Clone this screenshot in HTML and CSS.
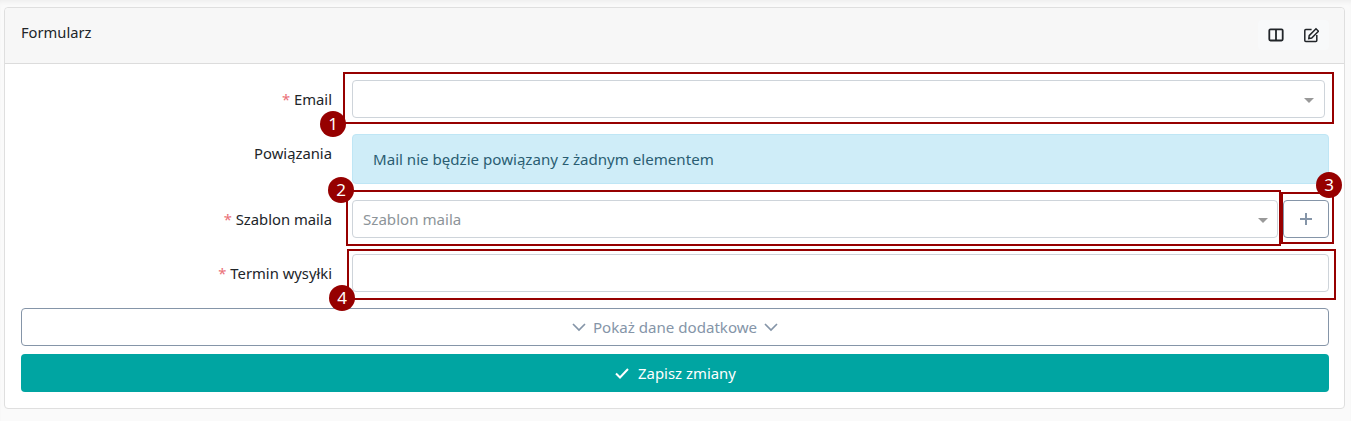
FILE: index.html
```html
<!DOCTYPE html>
<html lang="pl">
<head>
    <meta charset="UTF-8">
    <meta name="viewport" content="width=device-width, initial-scale=1.0">
    <title>Formularz</title>
    <link rel="stylesheet" href="styles.css">
</head>
<body>
    <div class="card">
        <div class="card-header">
            <span class="card-title">Formularz</span>
            <div class="header-tools">
                <button class="tool-btn" type="button">
                    <svg width="16" height="16" viewBox="0 0 16 16" fill="none" stroke="#212529" stroke-width="1.8"><rect x="1.3" y="2.3" width="13.4" height="11.2" rx="1.2"/><path d="M8 2.3v11.2"/></svg>
                </button>
                <button class="tool-btn" type="button">
                    <svg width="16" height="16" viewBox="0 0 16 16" fill="none" stroke="#212529" stroke-width="1.5"><path d="M8.6 2.6H2.8a1 1 0 0 0-1 1v10a1 1 0 0 0 1 1h10a1 1 0 0 0 1-1V8"/><path d="M6.2 8.6 13 1.8l2.5 2.5-6.8 6.8-2.9.4z"/></svg>
                </button>
            </div>
        </div>

        <form class="card-body">
            <div class="form-row">
                <label class="form-label"><span class="req">*</span> Email</label>
                <div class="form-control select"><span class="caret"></span></div>
            </div>
            <div class="form-row">
                <label class="form-label">Powiązania</label>
                <div class="alert-info">Mail nie będzie powiązany z żadnym elementem</div>
            </div>
            <div class="form-row">
                <label class="form-label"><span class="req">*</span> Szablon maila</label>
                <div class="input-group">
                    <div class="form-control select placeholder">Szablon maila<span class="caret"></span></div>
                    <button class="btn-add" type="button">
                        <svg width="16" height="16" viewBox="0 0 16 16" fill="none" stroke="#8595a8" stroke-width="2"><path d="M8 2v12M2 8h12"/></svg>
                    </button>
                </div>
            </div>
            <div class="form-row">
                <label class="form-label"><span class="req">*</span> Termin wysyłki</label>
                <div class="form-control"></div>
            </div>
            <button class="btn-more" type="button">
                <svg width="16" height="16" viewBox="0 0 16 16" fill="none" stroke="#8595a8" stroke-width="1.7"><path d="M2 5l6 6 6-6"/></svg>
                Pokaż dane dodatkowe
                <svg width="16" height="16" viewBox="0 0 16 16" fill="none" stroke="#8595a8" stroke-width="1.7"><path d="M2 5l6 6 6-6"/></svg>
            </button>
            <button class="btn-save" type="button">
                <svg width="16" height="16" viewBox="0 0 16 16" fill="none" stroke="#fff" stroke-width="2"><path d="M2 8.5l4 4 8-8.5"/></svg>
                Zapisz zmiany
            </button>
        </form>
    </div>

    <!-- oznaczenia na zrzucie -->
    <div class="mark mark-1"></div>
    <div class="mark mark-2"></div>
    <div class="mark mark-3"></div>
    <div class="mark mark-4"></div>
    <span class="badge badge-1">1</span>
    <span class="badge badge-2">2</span>
    <span class="badge badge-3">3</span>
    <span class="badge badge-4">4</span>
</body>
</html>
```

FILE: styles.css
```css
* {
    box-sizing: border-box;
}

body {
    margin: 0;
    padding: 7px 6px 12px 4px;
    height: 421px;
    overflow: hidden;
    position: relative;
    background-color: #fafafa;
    box-shadow: inset 0 4px 4px -2px #eee;
    font-family: "Noto Sans", "Open Sans", sans-serif;
    font-size: 15.1px;
    color: #212529;
}

.card {
    height: 402px;
    background-color: #fff;
    border: 1px solid #dfdfdf;
    border-radius: 4px;
}

.card-header {
    height: 56px;
    padding: 12px 15px 0 16px;
    display: flex;
    justify-content: space-between;
    background-color: #f7f7f7;
    border-bottom: 1px solid #dcdcdc;
    border-radius: 4px 4px 0 0;
}

.card-title {
    font-size: 14.7px;
    line-height: 24px;
}

.header-tools {
    display: flex;
    width: 71px;
    height: 30px;
    background-color: #f8f9fa;
    border-radius: 4px;
}

.tool-btn {
    flex: 1;
    padding: 0;
    border: 0;
    background: none;
    display: flex;
    align-items: center;
    justify-content: center;
}

.card-body {
    padding: 16px 15px 0 16px;
    display: flex;
    flex-direction: column;
}

.form-row {
    display: grid;
    grid-template-columns: 311px 1fr;
    column-gap: 20px;
    margin-bottom: 16px;
}

.form-label {
    font-size: 14.8px;
    text-align: right;
    line-height: 38px;
}

.req {
    color: #ea7078;
}

.form-control {
    height: 38px;
    background-color: #fff;
    border: 1px solid #ced4da;
    border-radius: 4px;
}

.select {
    display: flex;
    align-items: center;
    position: relative;
    padding-left: 10px;
    margin-right: 4px;
}

.input-group .select {
    flex: 1;
    margin-right: 0;
}

.placeholder {
    color: #8d9499;
}

.caret {
    position: absolute;
    right: 10px;
    top: 17px;
    border-style: solid;
    border-width: 5px 5px 0;
    border-color: #999 transparent transparent;
}

.input-group .caret {
    right: 9px;
}

.alert-info {
    height: 50px;
    padding: 0 20px;
    line-height: 48px;
    color: #2a5d72;
    background-color: #cfedf8;
    border: 1px solid #bfe6f5;
    border-radius: 4px;
}

.input-group {
    display: flex;
    gap: 5px;
}

.btn-add {
    width: 46px;
    height: 38px;
    padding: 0;
    display: flex;
    align-items: center;
    justify-content: center;
    background-color: #fff;
    border: 1px solid #8595a8;
    border-radius: 4px;
}

.btn-more,
.btn-save {
    height: 38px;
    padding: 0;
    display: flex;
    align-items: center;
    justify-content: center;
    gap: 6px;
    font: inherit;
    border-radius: 4px;
}

.btn-more {
    color: #8595a8;
    background-color: #fff;
    border: 1px solid #8595a8;
    margin-bottom: 8px;
}

.btn-save {
    font-size: 14.9px;
    color: #fff;
    background-color: #00a5a2;
    border: 0;
    gap: 8px;
}

/* czerwone ramki na zrzucie */
.mark {
    position: absolute;
    border: 2px solid #960000;
}

.mark-1 {
    left: 343px;
    top: 72px;
    width: 991px;
    height: 52px;
}

.mark-2 {
    left: 346px;
    top: 190px;
    width: 935px;
    height: 56px;
}

.mark-3 {
    left: 1281px;
    top: 192px;
    width: 53px;
    height: 52px;
}

.mark-4 {
    left: 347px;
    top: 249px;
    width: 989px;
    height: 51px;
}

.badge {
    position: absolute;
    width: 26px;
    height: 26px;
    line-height: 26px;
    text-align: center;
    font-size: 17px;
    color: #fff;
    background-color: #960000;
    border-radius: 50%;
}

.badge-1 {
    left: 320px;
    top: 111px;
}

.badge-2 {
    left: 328px;
    top: 177px;
}

.badge-3 {
    left: 1316px;
    top: 172px;
}

.badge-4 {
    left: 329px;
    top: 285px;
}
```
